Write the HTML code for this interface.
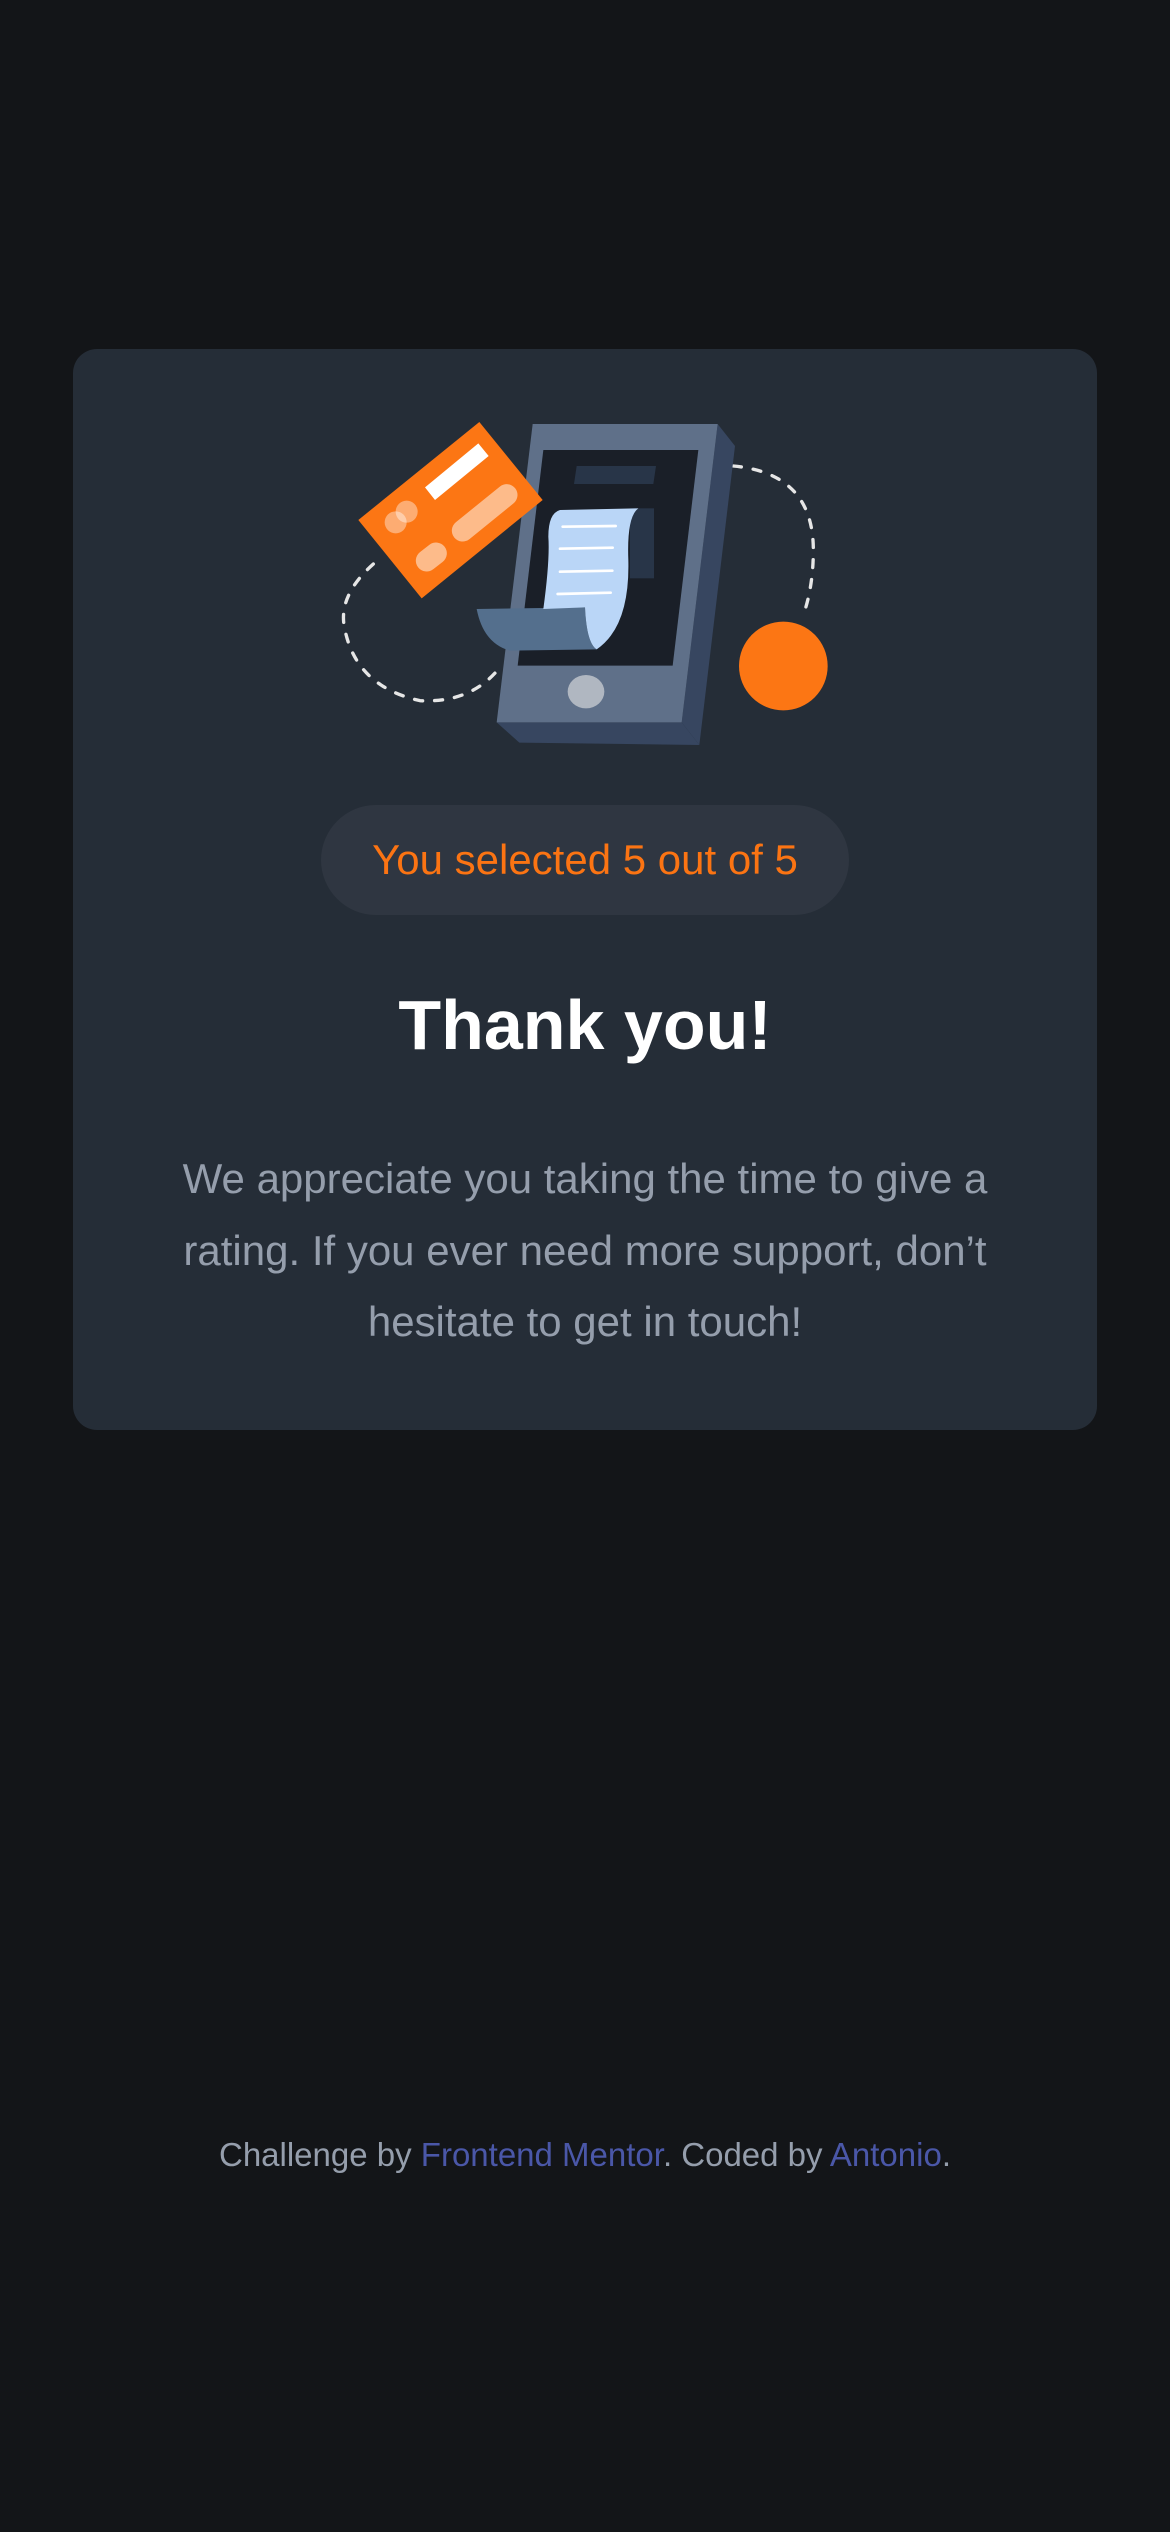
<!DOCTYPE html>
<html><head><meta charset="utf-8">
<style>
html,body{margin:0;padding:0;background:#131518;}
body{width:1170px;height:2532px;position:relative;font-family:"Liberation Sans",sans-serif;overflow:hidden;}
.card{position:absolute;left:73px;top:349px;width:1024px;height:1081px;background:#252d37;border-radius:24px;}
svg.ill{position:absolute;left:330px;top:410px;}
.pill{position:absolute;left:321px;top:805px;width:528px;height:110px;border-radius:55px;background:#2f3641;color:#fb7413;font-size:42px;line-height:110px;text-align:center;}
h1{position:absolute;left:0;width:1170px;top:980px;margin:0;text-align:center;color:#fff;font-size:70px;line-height:90px;font-weight:bold;}
p.msg{position:absolute;left:0;width:1170px;top:1143px;margin:0;text-align:center;color:#959eac;font-size:42px;line-height:71.5px;white-space:nowrap;}
.foot{position:absolute;left:0;width:1170px;top:2134px;text-align:center;color:#959eac;font-size:33px;line-height:42px;}
.foot span{color:#4a57a8;}
</style></head><body>
<div class="card"></div>
<svg class="ill" width="520" height="350" viewBox="0 0 1560 1050">
 <path d="M130,462 Q20,560 45,660 Q80,830 270,872 Q430,880 515,765" fill="none" stroke="#e6e6e6" stroke-width="10" stroke-dasharray="24,36" stroke-linecap="round"/>
 <path d="M1210,168 Q1450,190 1450,420 Q1450,520 1425,600" fill="none" stroke="#e6e6e6" stroke-width="10" stroke-dasharray="24,36" stroke-linecap="round"/>
 <polygon points="1163,42 1215,108 1108,1005 1055,937" fill="#374660"/>
 <polygon points="500,937 1055,937 1108,1005 568,998" fill="#374660"/>
 <polygon points="608,42 1163,42 1055,937 500,937" fill="#5f7089"/>
 <polygon points="640,120 1105,120 1028,767 563,767" fill="#1a1f28"/>
 <polygon points="740,168 978,168 970,222 732,222" fill="#283548"/>
 <rect x="900" y="295" width="72" height="210" fill="#283548"/>
 <path d="M440,597 L765,592 Q770,700 800,718 L540,722 Q460,700 440,597Z" fill="#546f8d"/>
 <path d="M690,300 L925,295 Q890,320 895,450 Q900,650 800,718 Q770,700 765,592 L640,597 Q660,450 655,380 Q655,310 690,300Z" fill="#bad6f7"/>
 <g stroke="#fff" stroke-width="8" stroke-linecap="round"><line x1="698" y1="350" x2="857" y2="348"/><line x1="690" y1="416" x2="848" y2="413"/><line x1="690" y1="485" x2="847" y2="482"/><line x1="683" y1="552" x2="842" y2="548"/></g>
 <ellipse cx="768" cy="845" rx="55" ry="50" fill="#b0b7c1"/>
 <polygon points="85,330 448,36 638,270 275,565" fill="#fc7614"/>
 <polygon points="285,232 445,100 476,138 315,270" fill="#fff"/>
 <circle cx="197" cy="337" r="33" fill="#fff" opacity=".4"/>
 <circle cx="230" cy="305" r="33" fill="#fff" opacity=".4"/>
 <g stroke="#fff" opacity=".5" stroke-width="65" stroke-linecap="round"><line x1="398" y1="362" x2="530" y2="255"/><line x1="290" y1="452" x2="318" y2="430"/></g>
 <circle cx="1360" cy="768" r="133" fill="#fc7614"/>
</svg>
<div class="pill">You selected 5 out of 5</div>
<h1>Thank you!</h1>
<p class="msg">We appreciate you taking the time to give a<br>rating. If you ever need more support, don’t<br>hesitate to get in touch!</p>
<div class="foot">Challenge by <span>Frontend Mentor</span>. Coded by <span>Antonio</span>.</div>
</body></html>
